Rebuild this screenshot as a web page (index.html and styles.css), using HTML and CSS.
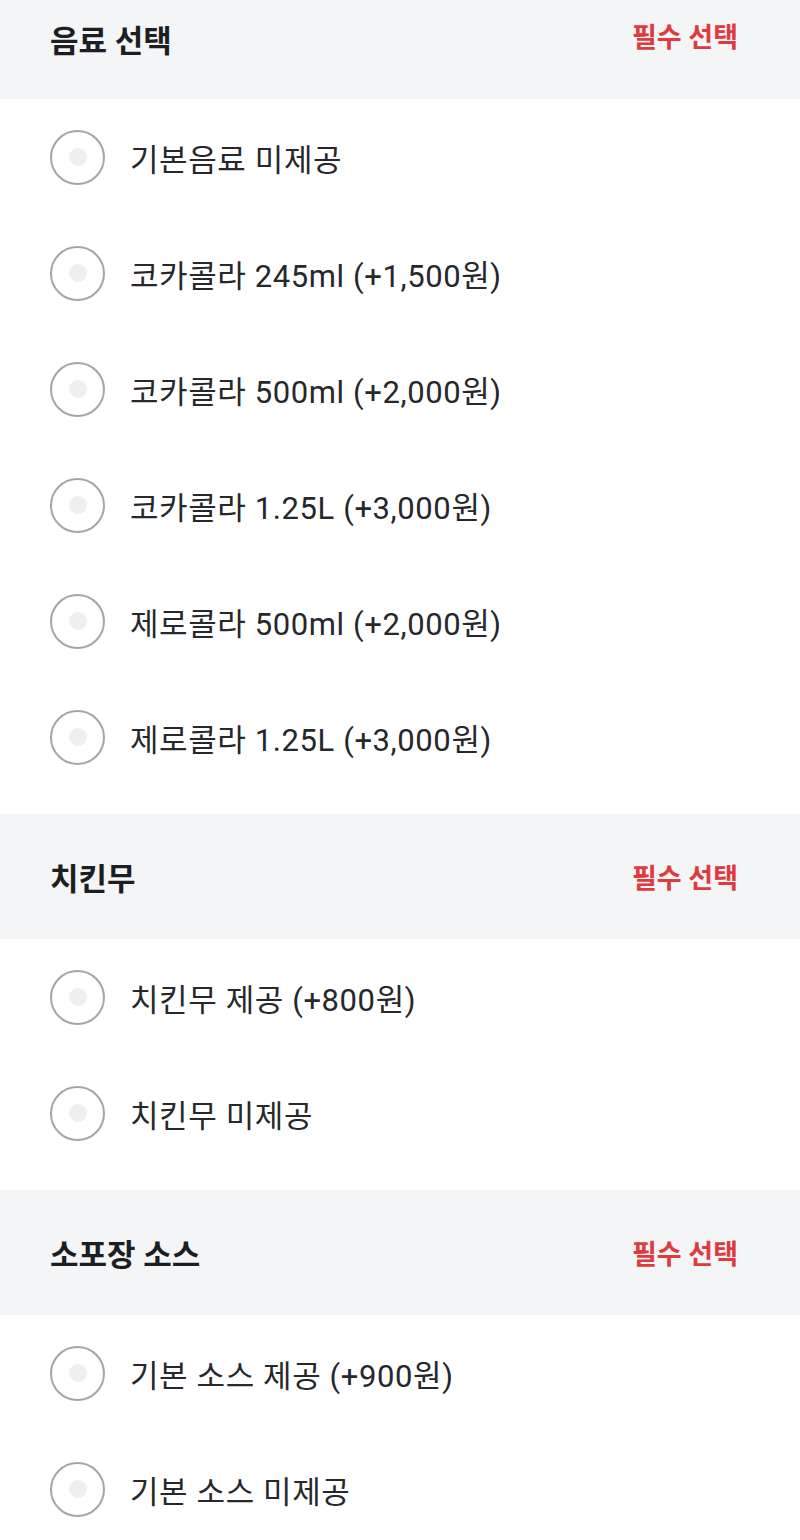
FILE: index.html
```html
<!DOCTYPE html>
<html lang="ko">
<head>
    <meta charset="UTF-8">
    <meta name="viewport" content="width=device-width, initial-scale=1.0">
    <title>옵션 선택</title>
    <link rel="stylesheet" href="styles.css">
</head>
<body>
<!-- 음료 -->
<div class="section">
    <div class="section-header first">
        <span class="section-title">음료 선택</span>
        <span class="required">필수 선택</span>
    </div>
    <div class="options">
        <label class="option"><span class="radio"></span><span class="option-text">기본음료 미제공</span></label>
        <label class="option"><span class="radio"></span><span class="option-text">코카콜라 245ml (+1,500원)</span></label>
        <label class="option"><span class="radio"></span><span class="option-text">코카콜라 500ml (+2,000원)</span></label>
        <label class="option"><span class="radio"></span><span class="option-text">코카콜라 1.25L (+3,000원)</span></label>
        <label class="option"><span class="radio"></span><span class="option-text">제로콜라 500ml (+2,000원)</span></label>
        <label class="option"><span class="radio"></span><span class="option-text">제로콜라 1.25L (+3,000원)</span></label>
    </div>
</div>

<!-- 치킨무 -->
<div class="section">
    <div class="section-header">
        <span class="section-title">치킨무</span>
        <span class="required">필수 선택</span>
    </div>
    <div class="options">
        <label class="option"><span class="radio"></span><span class="option-text">치킨무 제공 (+800원)</span></label>
        <label class="option"><span class="radio"></span><span class="option-text">치킨무 미제공</span></label>
    </div>
</div>

<!-- 소스 -->
<div class="section">
    <div class="section-header">
        <span class="section-title">소포장 소스</span>
        <span class="required">필수 선택</span>
    </div>
    <div class="options">
        <label class="option"><span class="radio"></span><span class="option-text">기본 소스 제공 (+900원)</span></label>
        <label class="option"><span class="radio"></span><span class="option-text">기본 소스 미제공</span></label>
    </div>
</div>
</body>
</html>
```

FILE: styles.css
```css
body {
    margin: 0;
    background-color: #fff;
    font-family: Roboto, "Noto Sans CJK KR", sans-serif;
    color: #222;
    overflow: hidden;
}

.section-header {
    height: 125px;
    background-color: #f4f5f7;
    display: flex;
    align-items: center;
    justify-content: space-between;
    padding: 0 62px 0 50px;
}

.section-header.first {
    height: 99px;
    align-items: flex-start;
    padding-top: 16px;
    box-sizing: border-box;
}

.section-title {
    font-size: 31px;
    font-weight: 700;
    color: #1c1e21;
}

.required {
    font-size: 27px;
    font-weight: 700;
    color: #e03a3e;
}

.options {
    padding-bottom: 19px;
}

.option {
    height: 116px;
    display: flex;
    align-items: center;
    padding-left: 50px;
}

.radio {
    width: 51px;
    height: 51px;
    border: 2px solid #a2a7ad;
    border-radius: 50%;
    display: flex;
    align-items: center;
    justify-content: center;
    margin-right: 25px;
}

.radio::after {
    content: "";
    width: 18px;
    height: 18px;
    border-radius: 50%;
    background-color: #efefef;
}

.option-text {
    font-size: 31px;
    letter-spacing: 0.6px;
    color: #26282b;
}
```
